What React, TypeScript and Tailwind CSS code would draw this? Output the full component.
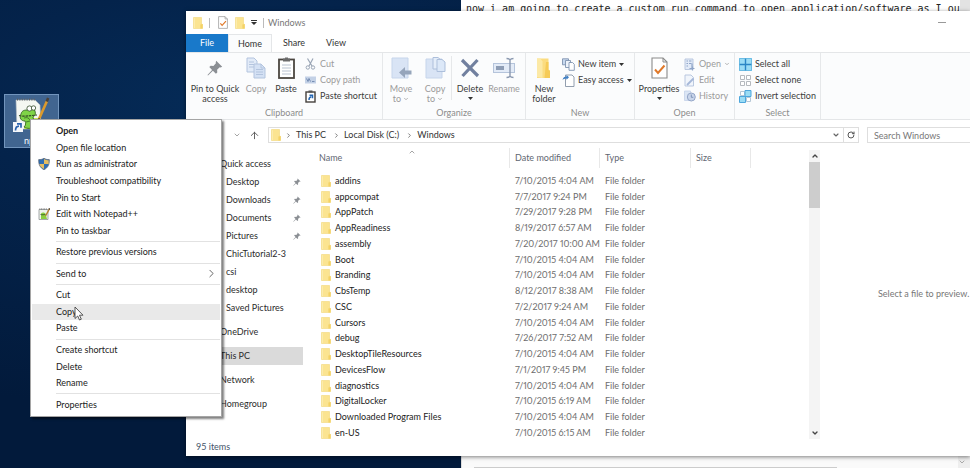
import type { ReactNode } from 'react';
import { ArrowUp, ChevronDown, ChevronRight, ChevronUp, RotateCw } from 'lucide-react';
import clsx from 'clsx';

const FILES = [
  { name: 'addins', date: '7/10/2015 4:04 AM' },
  { name: 'appcompat', date: '7/7/2017 9:24 PM' },
  { name: 'AppPatch', date: '7/29/2017 9:28 PM' },
  { name: 'AppReadiness', date: '8/19/2017 6:57 AM' },
  { name: 'assembly', date: '7/20/2017 10:00 AM' },
  { name: 'Boot', date: '7/10/2015 4:04 AM' },
  { name: 'Branding', date: '7/10/2015 4:04 AM' },
  { name: 'CbsTemp', date: '8/12/2017 8:38 AM' },
  { name: 'CSC', date: '7/2/2017 9:24 AM' },
  { name: 'Cursors', date: '7/10/2015 4:04 AM' },
  { name: 'debug', date: '7/26/2017 7:52 AM' },
  { name: 'DesktopTileResources', date: '7/10/2015 4:04 AM' },
  { name: 'DevicesFlow', date: '7/1/2017 9:45 PM' },
  { name: 'diagnostics', date: '7/10/2015 4:04 AM' },
  { name: 'DigitalLocker', date: '7/10/2015 6:19 AM' },
  { name: 'Downloaded Program Files', date: '7/10/2015 4:04 AM' },
  { name: 'en-US', date: '7/10/2015 6:15 AM' },
];

const QUICK_ACCESS = [
  { label: 'Desktop', pinned: true },
  { label: 'Downloads', pinned: true },
  { label: 'Documents', pinned: true },
  { label: 'Pictures', pinned: true },
  { label: 'ChicTutorial2-3', pinned: false },
  { label: 'csi', pinned: false },
  { label: 'desktop', pinned: false },
  { label: 'Saved Pictures', pinned: false },
];

const PLACES = ['OneDrive', 'This PC', 'Network', 'Homegroup'];

const FolderIcon = ({ className = 'w-[10px] h-3' }: { className?: string }) => (
  <svg viewBox="0 0 10 12" className={clsx('shrink-0', className)} aria-hidden="true">
    <path d="M0.5 0.5h8v6.500l1 0.4v4.100h-9z" fill="#fbe491" stroke="#f3d878" strokeWidth="0.6" />
    <path d="M7.4 7.4l2.2-0.5v4.6h-2.2z" fill="#f4d265" />
    <path d="M1.4 1.2v9.8" stroke="#fdf0b8" strokeWidth="0.8" />
  </svg>
);

const BigFolderIcon = () => (
  <svg viewBox="0 0 16 22" className="h-[22px] w-4" aria-hidden="true">
    <path d="M1 1.5h11.500v11l1.500 1V21H1z" fill="#fbdc80" />
    <path d="M1 1.5h3.500l2 3v16.5l-5.500-1z" fill="#fce9a6" />
    <path d="M10 5h2.500v8l1.500 1V21H8.500z" fill="#f6cb58" />
  </svg>
);

const CheckDocIcon = ({ className }: { className?: string }) => (
  <svg viewBox="0 0 17 22" className={className} aria-hidden="true">
    <path d="M1 1h11l4 4v16H1z" fill="#fff" stroke="#8a8a8a" strokeWidth="1.1" />
    <path d="M12 1v4h4" fill="none" stroke="#8a8a8a" strokeWidth="1" />
    <path d="M4 12.5l3 3.5 6.5-7.5" fill="none" stroke="#e0792a" strokeWidth="2" />
  </svg>
);

const PinIcon = ({ className }: { className?: string }) => (
  <svg viewBox="0 0 16 16" className={className} fill="#8b8f94" aria-hidden="true">
    <path d="M9.2 0.8l6 6-1.6 0.6-0.9-0.2-2.6 2.6 0.2 2.6-1.4 1.4-3-3L1 15.4 0.5 15l4.6-5.1-2.8-2.8 1.4-1.4 2.7 0.2 2.5-2.6-0.2-1z" />
  </svg>
);

const PagesIcon = ({ className }: { className?: string }) => (
  <svg viewBox="0 0 20 22" className={className} stroke="#b3c4de" strokeWidth="1" aria-hidden="true">
    <path d="M1 1h7l3 3v11H1z" fill="#e2ebf8" />
    <path d="M3 5h5M3 7.500h5M3 10h5" />
    <path d="M8 7h7l4 4v10H8z" fill="#d4e1f4" />
    <path d="M15 7v4h4M10 12.500h7M10 15h7M10 17.500h7" fill="none" />
  </svg>
);

const PasteIcon = () => (
  <svg viewBox="0 0 17 22" className="h-[22px] w-[17px]" aria-hidden="true">
    <rect x="1" y="2.500" width="15" height="18.500" fill="#fff" stroke="#4b4640" strokeWidth="1.800" />
    <path d="M5 1.500h7v3H5z" fill="#6b6b6b" />
    <path d="M7 0.500h3v2H7z" fill="#6b6b6b" />
    <path d="M4 8h9M4 11h9M4 14h9M4 17h9" stroke="#b9c3d0" strokeWidth="1" />
  </svg>
);

const CutIcon = () => (
  <svg viewBox="0 0 11 12" className="h-3 w-[11px]" fill="none" stroke="#9aa5b5" aria-hidden="true">
    <path d="M2.500 0.500l4.500 7.500M8 0.500L4 8" strokeWidth="1.200" />
    <circle cx="2.800" cy="9.500" r="1.700" />
    <circle cx="8" cy="9.500" r="1.700" />
  </svg>
);

const CopyPathIcon = () => (
  <svg viewBox="0 0 11 8" className="h-2 w-[11px]" aria-hidden="true">
    <path d="M0 0.500h11v7H0z" fill="#c3d1e6" />
    <path d="M1.500 2.500l1.500 3 1-3 1.500 3M7 5.500h2.500" stroke="#6d86ad" strokeWidth="0.900" fill="none" />
  </svg>
);

const PasteShortcutIcon = () => (
  <svg viewBox="0 0 11 13" className="h-[13px] w-[11px]" aria-hidden="true">
    <rect x="1" y="2" width="9" height="10" fill="#fff" stroke="#45413c" strokeWidth="1.400" />
    <path d="M3.500 0.500h4v2h-4z" fill="#555" />
    <path d="M4 10c0-2 0.800-3 2.300-3.200M4.500 5.200h3v3" stroke="#2467b4" strokeWidth="1.500" fill="none" />
  </svg>
);

const MoveToIcon = () => (
  <svg viewBox="0 0 21 22" className="h-[22px] w-[21px]" aria-hidden="true">
    <path d="M1 1h16v20H1z" fill="#d9e4f5" stroke="#c6d5eb" />
    <path d="M8 15.500l6-5.500v3.500h6.500v4H14V21z" fill="#96a5bb" />
  </svg>
);

const CopyToIcon = () => (
  <svg viewBox="0 0 21 22" className="h-[22px] w-[21px]" aria-hidden="true">
    <path d="M1 2h16v19H1z" fill="#d9e4f5" stroke="#c6d5eb" />
    <path d="M8 0.500h5l3 2.500v9H8z" fill="#e4edf9" stroke="#adbfdb" />
    <path d="M12 2.500h5l3 2.500v9.500h-8z" fill="#dce8f8" stroke="#adbfdb" />
  </svg>
);

const DeleteIcon = () => (
  <svg viewBox="0 0 20 20" className="h-[22px] w-5" aria-hidden="true">
    <path d="M2 2l16 16M17.500 2L2.500 18" stroke="#71809f" strokeWidth="3.200" />
  </svg>
);

const RenameIcon = () => (
  <svg viewBox="0 0 22 22" className="h-[22px] w-[22px]" aria-hidden="true">
    <rect x="0.500" y="6.500" width="21" height="9" fill="#e3ebf7" stroke="#b5c4db" />
    <path d="M3 9h8v4H3z" fill="#8e9db5" />
    <path d="M13.500 1.500c2 0 3 0.500 3.500 1.500 0.500-1 1.500-1.500 3.500-1.500M17 3v16M13.500 20.500c2 0 3-0.500 3.500-1.500 0.500 1 1.500 1.500 3.500 1.500" fill="none" stroke="#8b99b0" strokeWidth="1.400" />
  </svg>
);

const NewItemIcon = () => (
  <svg viewBox="0 0 13 13" className="h-[13px] w-[13px]" stroke="#7f93b0" strokeWidth="0.900" aria-hidden="true">
    <path d="M0.500 0.800h6v6h-6z" fill="#c7d8ee" />
    <path d="M3.500 2.500h5v7h-5z" fill="#eef3fa" />
    <path d="M7 4.500h3.500l1.800 1.800v6H7z" fill="#fff" />
  </svg>
);

const EasyAccessIcon = () => (
  <svg viewBox="0 0 13 13" className="h-[13px] w-[13px]" aria-hidden="true">
    <path d="M3.500 1h6.500l2 2v9.500h-8.500z" fill="#fff" stroke="#8794a6" strokeWidth="0.900" />
    <path d="M0.500 6c0.500-2.500 2-3.500 4-3.500V1l2.500 2.300-2.500 2.400V4.500c-1.800 0-3 0.500-4 1.500z" fill="#3f7fc4" />
  </svg>
);

const OpenIcon = () => (
  <svg viewBox="0 0 11 13" className="h-[13px] w-[11px]" aria-hidden="true">
    <path d="M1 1h8v10.500H1z" fill="#e3ebf8" stroke="#b3c3dd" strokeWidth="0.900" />
    <path d="M2.500 3h1.500M2.500 5.500h1.500M2.500 8h1.500M5 3h2.500M5 5.500h2.500" stroke="#8fa5c8" />
    <path d="M8 5.500v5M5.500 10.500h5M8.500 12.500v-4" stroke="#8fa5c8" strokeWidth="1.200" />
  </svg>
);

const EditIcon = () => (
  <svg viewBox="0 0 11 13" className="h-[13px] w-[11px]" aria-hidden="true">
    <path d="M1 1h6l2.500 2.500V12H1z" fill="#f1f5fb" stroke="#b3c3dd" strokeWidth="0.900" />
    <path d="M3 11l6.500-6.500" stroke="#a5b8d8" strokeWidth="1.800" />
  </svg>
);

const HistoryIcon = () => (
  <svg viewBox="0 0 12 12" className="h-3 w-3" aria-hidden="true">
    <path d="M0.500 1h6v9.500h-6z" fill="#dbe5f4" stroke="#c4d2e8" strokeWidth="0.800" />
    <circle cx="7.300" cy="7" r="4" fill="#c9d5ea" stroke="#94a6c8" />
    <path d="M7.300 4.500v2.800h2" stroke="#7f93b8" fill="none" />
  </svg>
);

const SelectAllIcon = () => (
  <svg viewBox="0 0 13 13" className="h-[13px] w-[13px]" aria-hidden="true">
    <path d="M0 0h13v13H0z" fill="#9adcf5" />
    <path d="M6.500 0v13M0 6.500h13" stroke="#2b86c5" strokeWidth="1.400" />
    <path d="M0.500 0.500h12v12H0.500z" fill="none" stroke="#5fb4e0" strokeWidth="0.800" />
  </svg>
);

const SelectNoneIcon = () => (
  <svg viewBox="0 0 13 13" className="h-[13px] w-[13px]" fill="#fff" stroke="#b5b9be" aria-hidden="true">
    <path d="M1.500 1.500h4v4h-4zM7.500 1.500h4v4h-4zM1.500 7.500h4v4h-4zM7.500 7.500h4v4h-4z" />
  </svg>
);

const InvertIcon = () => (
  <svg viewBox="0 0 13 13" className="h-[13px] w-[13px]" aria-hidden="true">
    <path d="M1.500 1.500h4v4h-4zM7.500 7.500h4v4h-4z" fill="#fff" stroke="#b5c7d6" />
    <path d="M6 0.500h6v6H6zM0.500 6.500h6v6h-6z" fill="#9adcf5" stroke="#4da6dc" />
  </svg>
);

const ShieldIcon = () => (
  <svg viewBox="0 0 12 12" className="h-3 w-3" aria-hidden="true">
    <path d="M6 0.300c1.500 1 3.500 1.400 5.300 1.300 0.200 4.500-1 8-5.300 10.100C1.700 9.600 0.500 6.100 0.700 1.600 2.500 1.700 4.500 1.300 6 0.300z" fill="#2f6eb5" stroke="#59626e" strokeWidth="0.700" />
    <path d="M6 1c1.400 0.900 3 1.200 4.700 1.200V6H6zM1.400 6H6v5C3 9.500 1.700 7.700 1.400 6z" fill="#e5bd62" />
  </svg>
);

const NotepadIcon = ({ className }: { className?: string }) => (
  <svg viewBox="0 0 36 34" className={className} aria-hidden="true">
    <path d="M2 3h19l5 5 1 24H3z" fill="#f4f7f2" stroke="#b9bfc4" strokeWidth="0.600" />
    <path d="M3 2.500h19" stroke="#5d5f62" strokeWidth="2" strokeDasharray="1 1.400" />
    <path d="M13 21h13v11H10z" fill="#c9ea5a" />
    <path d="M7 17c1-4 4-4 7-4 2-2 6-2 7 1 1 3 0 5-2 6l2 9c-3 3-8 3-11 1 2-2 2-4 1-6-4 0-6-3-4-7z" fill="#7fd447" stroke="#2c5b1d" strokeWidth="0.800" />
    <circle cx="15.500" cy="11.500" r="2.600" fill="#fff" stroke="#314a2a" strokeWidth="0.800" />
    <circle cx="19.500" cy="11" r="2.200" fill="#fff" stroke="#314a2a" strokeWidth="0.800" />
    <path d="M5 18.500c5 1.500 11 0 18-0.500" stroke="#344a26" strokeWidth="1.200" strokeDasharray="2.500 0.800" fill="none" />
    <path d="M10 21c3-1 5 0 6 2M12 25l4-1" stroke="#2c5b1d" strokeWidth="0.700" fill="none" />
    <path d="M25 22L33 4" stroke="#dd9a2c" strokeWidth="2.600" />
    <path d="M32.700 4.500l1.500-3.500" stroke="#4d4136" strokeWidth="2.600" />
    <path d="M25.300 21.300L24.300 24" stroke="#3a3a3a" strokeWidth="1.600" />
  </svg>
);

const NotepadSmallIcon = () => (
  <svg viewBox="0 0 12 12" className="h-3 w-3" aria-hidden="true">
    <path d="M1 1.500h9v10H1z" fill="#eef2ea" stroke="#8f9698" strokeWidth="0.800" />
    <path d="M1.500 1h8" stroke="#555" strokeWidth="1.200" strokeDasharray="0.800 0.800" />
    <path d="M3 5.500c1-1.500 4-1.500 4.500 0.500L9 11H3z" fill="#8ccf3f" />
    <path d="M2.500 6.500c2 0.500 3 0.300 5-0.200" stroke="#35502a" strokeWidth="0.800" fill="none" />
    <path d="M7.500 8L11.500 0.800" stroke="#b9822b" strokeWidth="1.400" />
    <path d="M11 1.500l0.600-1.200" stroke="#3f3a36" strokeWidth="1.400" />
  </svg>
);

const Caret = ({ muted = false }: { muted?: boolean }) =>
  muted ? (
    <ChevronDown size={6} strokeWidth={3} className="inline shrink-0" />
  ) : (
    <svg viewBox="0 0 5 3" className="inline h-[3px] w-[5px] shrink-0" aria-hidden="true">
      <path d="M0 0h5L2.500 3z" fill="#333" />
    </svg>
  );

type BigButtonProps = {
  icon: ReactNode;
  lines: string[];
  width: string;
  disabled?: boolean;
  caret?: boolean;
};

const BigButton = ({ icon, lines, width, disabled, caret }: BigButtonProps) => (
  <button
    disabled={disabled}
    className={clsx(
      'flex shrink-0 flex-col items-center whitespace-nowrap leading-[10px]',
      width,
      disabled ? 'text-[#9b9b9b]' : 'text-[#3c3c3c]'
    )}
  >
    <span className="mb-1 flex h-6 items-center justify-center">{icon}</span>
    {lines.map((line, i) => (
      <span key={line} className="flex items-center gap-[2px]">
        {line}
        {caret && i === 1 && <Caret muted={disabled} />}
      </span>
    ))}
    {caret && lines.length === 1 && (
      <span className="flex h-2 items-center">
        <Caret />
      </span>
    )}
  </button>
);

type SmallButtonProps = { icon: ReactNode; label: string; disabled?: boolean; caret?: boolean };

const SmallButton = ({ icon, label, disabled, caret }: SmallButtonProps) => (
  <button
    disabled={disabled}
    className={clsx(
      'flex h-4 items-center gap-[3px] whitespace-nowrap',
      disabled ? 'text-[#9b9b9b]' : 'text-[#3c3c3c]'
    )}
  >
    <span className="flex w-[13px] justify-center">{icon}</span>
    {label}
    {caret && <Caret muted={disabled} />}
  </button>
);

const RibbonGroup = ({ label, width, children }: { label: string; width: string; children: ReactNode }) => (
  <section className={clsx('flex shrink-0 flex-col border-r border-[#e6e8ea]', width)}>
    <div className="flex flex-1 pt-[3px]">{children}</div>
    <h2 className="h-[11px] text-center leading-[10px] text-[#8c8c8c]">{label}</h2>
  </section>
);

const Ribbon = () => (
  <div className="flex h-[68px] border-y border-[#e4e6e8] bg-[#fbfcfd]">
    <RibbonGroup label="Clipboard" width="w-[197px]">
      <BigButton icon={<PinIcon className="size-4" />} lines={['Pin to Quick', 'access']} width="w-[58px]" />
      <BigButton icon={<PagesIcon className="h-[22px] w-5" />} lines={['Copy']} width="w-6" disabled />
      <BigButton icon={<PasteIcon />} lines={['Paste']} width="w-9" />
      <div className="flex flex-col">
        <SmallButton icon={<CutIcon />} label="Cut" disabled />
        <SmallButton icon={<CopyPathIcon />} label="Copy path" disabled />
        <SmallButton icon={<PasteShortcutIcon />} label="Paste shortcut" />
      </div>
    </RibbonGroup>
    <RibbonGroup label="Organize" width="w-[143px]">
      <BigButton icon={<MoveToIcon />} lines={['Move', 'to']} width="w-9" disabled caret />
      <BigButton icon={<CopyToIcon />} lines={['Copy', 'to']} width="w-8" disabled caret />
      <div className="mb-2 w-px bg-[#e6e8ea]" />
      <BigButton icon={<DeleteIcon />} lines={['Delete']} width="w-9" caret />
      <BigButton icon={<RenameIcon />} lines={['Rename']} width="w-8" disabled />
    </RibbonGroup>
    <RibbonGroup label="New" width="w-[109px]">
      <BigButton icon={<BigFolderIcon />} lines={['New', 'folder']} width="w-9" />
      <div className="flex flex-col">
        <SmallButton icon={<NewItemIcon />} label="New item" caret />
        <SmallButton icon={<EasyAccessIcon />} label="Easy access" caret />
      </div>
    </RibbonGroup>
    <RibbonGroup label="Open" width="w-[100px]">
      <BigButton icon={<CheckDocIcon className="h-[22px] w-[17px]" />} lines={['Properties']} width="w-12" caret />
      <div className="flex flex-col">
        <SmallButton icon={<OpenIcon />} label="Open" disabled caret />
        <SmallButton icon={<EditIcon />} label="Edit" disabled />
        <SmallButton icon={<HistoryIcon />} label="History" disabled />
      </div>
    </RibbonGroup>
    <RibbonGroup label="Select" width="w-[86px]">
      <div className="flex flex-col pl-1">
        <SmallButton icon={<SelectAllIcon />} label="Select all" />
        <SmallButton icon={<SelectNoneIcon />} label="Select none" />
        <SmallButton icon={<InvertIcon />} label="Invert selection" />
      </div>
    </RibbonGroup>
  </div>
);

const AddressBar = () => (
  <div className="flex items-center gap-2 pb-[5px] pt-[7px] text-[#333]">
    <div className="flex w-[74px] shrink-0 items-center justify-end gap-2">
      <ChevronRight size={8} className="text-[#bbb]" />
      <ChevronDown size={8} className="text-[#777]" />
      <button aria-label="Up">
        <ArrowUp size={11} strokeWidth={2} className="text-[#555]" />
      </button>
    </div>
    <nav aria-label="Address" className="flex h-4 w-[591px] shrink-0 items-center border border-[#dedede] pl-[2px]">
      <FolderIcon />
      {['This PC', 'Local Disk (C:)', 'Windows'].map((crumb) => (
        <span key={crumb} className="flex items-center">
          <ChevronRight size={7} strokeWidth={2.500} className="mx-1 text-[#555]" />
          <button className="mr-[3px]">{crumb}</button>
        </span>
      ))}
      <button aria-label="Previous locations" className="ml-auto px-[3px]">
        <ChevronDown size={8} strokeWidth={3.500} className="text-[#666]" />
      </button>
      <button aria-label="Refresh" className="flex h-full w-[15px] items-center justify-center border-l border-[#dedede]">
        <RotateCw size={8} strokeWidth={3} className="text-[#555]" />
      </button>
    </nav>
    <input
      type="search"
      aria-label="Search Windows"
      placeholder="Search Windows"
      className="h-4 min-w-0 flex-1 border border-r-0 border-[#dedede] pl-[6px] placeholder:text-[#777]"
    />
  </div>
);

const NavPane = () => (
  <nav aria-label="Folders" className="flex w-[117px] shrink-0 flex-col gap-[6px] pt-[7px] text-[#2b2b2b]">
    <div>
      <a href="#quick" className="flex h-[18px] items-center pl-[34px]">Quick access</a>
      {QUICK_ACCESS.map(({ label, pinned }) => (
        <a key={label} href="#folder" className="flex h-[18px] items-center justify-between pl-10 pr-[2px]">
          {label}
          {pinned && <PinIcon className="size-2" />}
        </a>
      ))}
    </div>
    {PLACES.map((place) => (
      <a
        key={place}
        href="#place"
        className={clsx('flex h-[18px] items-center pl-[34px]', place === 'This PC' && 'bg-[#dadada]')}
      >
        {place}
      </a>
    ))}
  </nav>
);

const FileList = () => (
  <div className="relative ml-4 w-[490px] shrink-0">
    <table className="h-full w-[432px] table-fixed text-left">
      <thead>
        <tr className="h-[25px] align-top text-[#5f6772]">
          <th className="w-[191px] p-0 font-normal">
            <div className="flex h-5 items-center border-r border-[#e8e8e8]">Name</div>
          </th>
          <th className="w-[90px] p-0 font-normal">
            <div className="flex h-5 items-center border-r border-[#e8e8e8] pl-[5px]">Date modified</div>
          </th>
          <th className="w-[91px] p-0 font-normal">
            <div className="flex h-5 items-center border-r border-[#e8e8e8] pl-[5px]">Type</div>
          </th>
          <th className="w-[60px] p-0 font-normal">
            <div className="flex h-5 items-center border-r border-[#e8e8e8] pl-[5px]">Size</div>
          </th>
        </tr>
      </thead>
      <tbody className="text-[#6d6d6d]">
        {FILES.map(({ name, date }) => (
          <tr key={name}>
            <td className="p-0 text-[#222]">
              <div className="flex items-center gap-1 pl-[2px]">
                <FolderIcon />
                {name}
              </div>
            </td>
            <td className="whitespace-nowrap p-0 pl-[5px] proportional-nums">{date}</td>
            <td className="p-0 pl-[5px]">File folder</td>
            <td className="p-0" />
          </tr>
        ))}
      </tbody>
    </table>
    <ChevronUp size={8} className="absolute left-[89px] top-0 text-[#777]" />
  </div>
);

const ScrollBar = () => (
  <div className="my-[2px] flex w-[11px] shrink-0 flex-col items-center bg-[#f4f4f4]">
    <button aria-label="Scroll up" className="flex h-3 items-center">
      <ChevronUp size={8} strokeWidth={4} className="text-[#444]" />
    </button>
    <div className="h-[46px] w-full bg-[#cdcdcd]" />
    <button aria-label="Scroll down" className="mt-auto flex h-3 items-center">
      <ChevronDown size={8} strokeWidth={4} className="text-[#444]" />
    </button>
  </div>
);

const ExplorerWindow = () => (
  <main className="absolute bottom-3 left-[186px] right-0 top-[11px] flex flex-col bg-white shadow-[0_1px_4px_rgba(0,0,0,0.5)]">
    <header className="flex h-[23px] items-center text-[#777]">
      <FolderIcon className="ml-[7px] h-3 w-[10px]" />
      <span className="ml-[6px] h-[10px] w-px bg-[#bbb]" />
      <CheckDocIcon className="ml-2 h-[13px] w-[10px]" />
      <FolderIcon className="ml-[7px] h-3 w-[10px]" />
      <svg viewBox="0 0 6 5" className="ml-[6px] h-[5px] w-[6px]" aria-hidden="true">
        <path d="M0 0h6v1H0zM0 2h6L3 5z" fill="#333" />
      </svg>
      <span className="ml-[6px] h-[10px] w-px bg-[#bbb]" />
      <h1 className="ml-1">Windows</h1>
      <button aria-label="Minimize" className="ml-auto mr-6 h-px w-2 bg-[#999]" />
    </header>
    <div role="tablist" className="flex h-[18px] items-stretch text-[#333]">
      <button role="tab" className="w-[42px] bg-[#1979ca] text-white">File</button>
      <button role="tab" aria-selected="true" className="w-11 border-x border-t border-[#e4e6e8] bg-[#fbfcfd]">Home</button>
      <button role="tab" className="w-11">Share</button>
      <button role="tab" className="w-10">View</button>
    </div>
    <Ribbon />
    <AddressBar />
    <div className="flex min-h-0 flex-1">
      <NavPane />
      <FileList />
      <ScrollBar />
      <p className="flex-1 whitespace-nowrap pl-[58px] pt-[140px] text-[#777]">Select a file to preview.</p>
    </div>
    <footer className="h-[15px] shrink-0 pl-[10px] text-[#44546a]">95 items</footer>
  </main>
);

const MenuItem = ({ label, icon, active }: { label: string; icon?: ReactNode; active?: boolean }) => (
  <button
    role="menuitem"
    className={clsx('flex flex-1 items-center text-left', active && 'bg-[#e9e9e9]', label === 'Open' && 'font-bold')}
  >
    <span className="flex w-6 items-center justify-center">{icon}</span>
    <span className="flex-1">{label}</span>
    {label === 'Send to' && <ChevronRight size={13} strokeWidth={1.500} className="mr-[2px] text-[#444]" />}
  </button>
);

const Divider = () => <div role="separator" className="my-[2px] ml-6 h-px bg-[#e2e2e2]" />;

const ContextMenu = () => (
  <div
    role="menu"
    className="absolute left-[30px] top-[119px] flex h-[298px] w-[192px] flex-col border border-[#a5a5a5] bg-white px-px py-[3px] text-[#222] shadow-[2px_2px_2px_rgba(0,0,0,0.5)]"
  >
    <MenuItem label="Open" />
    <MenuItem label="Open file location" />
    <MenuItem label="Run as administrator" icon={<ShieldIcon />} />
    <MenuItem label="Troubleshoot compatibility" />
    <MenuItem label="Pin to Start" />
    <MenuItem label="Edit with Notepad++" icon={<NotepadSmallIcon />} />
    <MenuItem label="Pin to taskbar" />
    <Divider />
    <MenuItem label="Restore previous versions" />
    <Divider />
    <MenuItem label="Send to" />
    <Divider />
    <MenuItem label="Cut" />
    <MenuItem label="Copy" active />
    <MenuItem label="Paste" />
    <Divider />
    <MenuItem label="Create shortcut" />
    <MenuItem label="Delete" />
    <MenuItem label="Rename" />
    <Divider />
    <MenuItem label="Properties" />
  </div>
);

const DesktopShortcut = () => (
  <button className="absolute left-1 top-[94px] flex w-[55px] flex-col items-center border border-[#7295bd] bg-[#416590] pt-[2px] text-white">
    <NotepadIcon className="h-[34px] w-9" />
    <svg viewBox="0 0 10 10" className="absolute left-2 top-[27px] size-[10px]" aria-hidden="true">
      <path d="M0 0h10v10H0z" fill="#f5f7fa" />
      <path d="M2.500 8.500c0-3 1-4.200 3.500-4.300M4 1.800h4v4" fill="none" stroke="#2a62ad" strokeWidth="1.700" />
    </svg>
    <span className="pt-1">npp</span>
  </button>
);

const EditorWindow = () => (
  <div className="absolute bottom-0 left-[461px] right-0 top-0 flex flex-col justify-between bg-white">
    <div className="flex h-3">
      <p className="flex-1 whitespace-nowrap pl-[5px] pt-[3px] font-['DejaVu_Sans_Mono',monospace] text-[10px] text-[#222]">
        now i am going to create a custom run command to open application/software as I ou
      </p>
      <div className="w-[10px] bg-[#e3e3e3]" />
    </div>
    <div className="flex h-3 items-start justify-end border-l border-[#ddd] bg-[#fafafa]">
      <div className="ml-3 mr-auto h-px w-[363px] self-end bg-[#ccc]" />
      <div className="flex h-full w-3 items-center bg-[#eee]">
        <ChevronDown size={8} strokeWidth={3} className="text-[#aaa]" />
      </div>
    </div>
  </div>
);

const Cursor = () => (
  <svg viewBox="0 0 10 15" className="absolute left-[74px] top-[306px] h-[15px] w-[10px]" aria-hidden="true">
    <path d="M1 1v11.500l2.700-2.500 1.800 4 1.800-0.800-1.800-4h3.500z" fill="#fff" stroke="#444" strokeWidth="0.900" />
  </svg>
);

const App = () => (
  <div className="relative h-screen overflow-hidden bg-[#032147] bg-[radial-gradient(ellipse_at_22%_22%,#052b57_0%,#04234b_22%,#021a3b_60%)] font-['Lato','Open_Sans',sans-serif] text-[9px] leading-3">
    <EditorWindow />
    <ExplorerWindow />
    <DesktopShortcut />
    <ContextMenu />
    <Cursor />
  </div>
);

export default App;
